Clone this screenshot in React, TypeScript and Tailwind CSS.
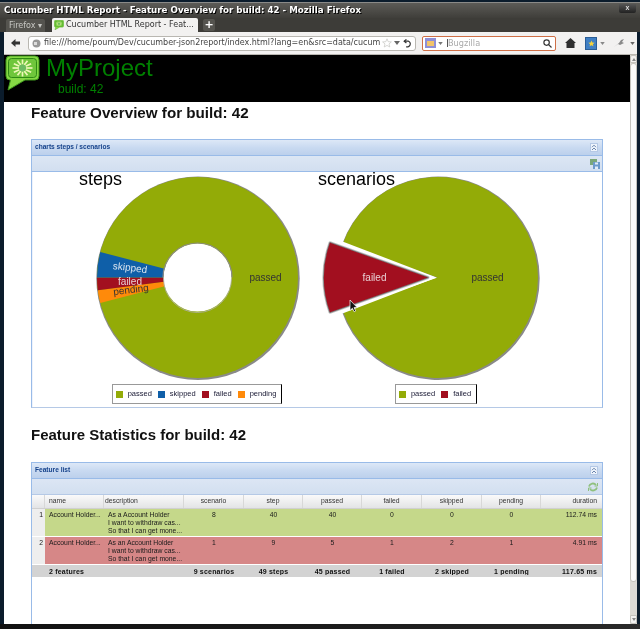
import React from "react";

const AR = "font-['Liberation_Sans',Arial,sans-serif]";
const GRID = "grid grid-cols-[13px_59px_80px_60px_59px_59px_60px_60px_59px_61px]";
const INNER = "grid grid-cols-[59px_80px_60px_59px_59px_60px_60px_59px_61px]";

function sector(cx: number, cy: number, r: number, r0: number, a0: number, a1: number) {
  const p = (rad: number, a: number) => {
    const t = (a * Math.PI) / 180;
    return `${(cx + rad * Math.cos(t)).toFixed(2)} ${(cy + rad * Math.sin(t)).toFixed(2)}`;
  };
  const large = a1 - a0 > 180 ? 1 : 0;
  if (r0 > 0) return `M${p(r, a0)} A${r} ${r} 0 ${large} 1 ${p(r, a1)} L${p(r0, a1)} A${r0} ${r0} 0 ${large} 0 ${p(r0, a0)} Z`;
  return `M${cx} ${cy} L${p(r, a0)} A${r} ${r} 0 ${large} 1 ${p(r, a1)} Z`;
}

const OLIVE = "#93ab07";
const BLUE = "#0f5fa8";
const RED = "#a20f1f";
const ORANGE = "#ff8a0a";

function StepsPie() {
  const cx = 103.5, cy = 105.5, r = 100.5, h = 34;
  return (
    <svg width="208" height="210" viewBox="0 0 208 210" className="block overflow-visible">
      <circle cx={cx + 0.5} cy={cy + 0.8} r={r + 1.2} fill="#8a8a8a" />
      <circle cx={cx} cy={cy} r={r} fill={OLIVE} />
      <path d={sector(cx, cy, r, h, 165.3, 172.65)} fill={ORANGE} />
      <path d={sector(cx, cy, r, h, 172.65, 180)} fill={RED} />
      <path d={sector(cx, cy, r, h, 180, 194.7)} fill={BLUE} />
      <circle cx={cx} cy={cy} r={h} fill="#fff" />
      <path d={`M${cx - h - 0.5} ${cy} A${h + 0.5} ${h + 0.5} 0 0 1 ${cx + h + 0.5} ${cy}`} fill="none" stroke="#8a8a8a" strokeWidth="1.2" />
      <path d={`M${cx - h} ${cy + 1} A${h} ${h} 0 0 0 ${cx + h} ${cy + 1}`} fill="none" stroke="#b0b0b0" strokeWidth="0.8" />
      <g fontFamily="'Liberation Sans',Arial,sans-serif" fontSize="10" textAnchor="middle">
        <text x="171.5" y="109" fill="#333">passed</text>
        <text x="36" y="99" fill="#d9e4ef" transform="rotate(7 36 96)">skipped</text>
        <text x="36" y="112.5" fill="#e8d0d4">failed</text>
        <text x="37" y="121" fill="#333" transform="rotate(-7 37 118)">pending</text>
      </g>
    </svg>
  );
}

function ScenariosPie() {
  const cx = 114.5, cy = 105.5, r = 100.5;
  const fx = 105;
  const failed = sector(fx, cy, 104, 0, 160.5, 199.5);
  return (
    <svg width="226" height="210" viewBox="0 0 226 210" className="block overflow-visible">
      <path d={sector(cx + 0.5, cy + 0.8, r + 1.2, 0, 199.5, 520.5)} fill="#8a8a8a" />
      <path d={sector(cx, cy, r, 0, 199.5, 520.5)} fill={OLIVE} />
      <path d={sector(cx - 1, cy, r + 3, 0, 159, 201)} fill="#fff" />
      <path d={failed} fill="#b8b8b8" stroke="#c4c4c4" strokeWidth="3" strokeLinejoin="round" />
      <path d={failed} fill="#777" stroke="#777" strokeWidth="1.4" strokeLinejoin="round" />
      <path d={failed} fill={RED} />
      <g fontFamily="'Liberation Sans',Arial,sans-serif" fontSize="10" textAnchor="middle">
        <text x="164.5" y="109" fill="#333">passed</text>
        <text x="51.5" y="109" fill="#e8d0d4">failed</text>
      </g>
      <path d="M27 128v10.5l2.4-2.3 1.7 3.6 1.6-.8-1.7-3.4h3.2z" fill="#111" stroke="#fff" strokeWidth="0.7" />
    </svg>
  );
}

function Legend({ items, className }: { items: [string, string][]; className: string }) {
  return (
    <div className={`flex items-center h-[20px] bg-white border border-[#999] border-r-black pl-[3px] pr-[5px] ${className}`}>
      {items.map(([label, color], i) => (
        <div key={label} className={`flex items-center ${i > 0 ? "ml-[6px]" : ""}`}>
          <span className="w-[7px] h-[7px] block" style={{ backgroundColor: color }} />
          <span className="ml-[5px] text-[7.5px] leading-none text-[#20203a]">{label}</span>
        </div>
      ))}
    </div>
  );
}

function Collapse() {
  return (
    <div className="w-[8px] h-[9px] bg-[#eef4fc] border border-[#b5c9e6] flex items-center justify-center">
      <svg width="6" height="7" viewBox="0 0 6 7" fill="none" stroke="#4a6a98" strokeWidth="0.8">
        <path d="M1 3.2L3 1.2L5 3.2M1 6L3 4L5 6" />
      </svg>
    </div>
  );
}

function PanelHead({ title }: { title: string }) {
  return (
    <div className="h-[16px] shrink-0 flex items-center justify-between pl-[3px] pr-[4px] border-b border-[#99bbe8] bg-gradient-to-b from-[#dde8f7] via-[#c9daf1] to-[#bcd0ec]">
      <span className="text-[6.6px] font-bold text-[#15428b] leading-none">{title}</span>
      <Collapse />
    </div>
  );
}

function Bubble({ size }: { size: number }) {
  const angles = [0, 30, 60, 90, 120, 150, 180, 210, 240, 270, 300, 330];
  return (
    <svg width={size} height={size * 36 / 35} viewBox="0 0 35 36" className="block shrink-0">
      <path d="M5 1H30Q34 1 34 5V21Q34 25 30 25H20L3 35L5.5 25H5Q1 25 1 21V5Q1 1 5 1Z" fill="#86d845" stroke="#3f9a1c" strokeWidth="1" />
      <rect x="3.5" y="3.5" width="28" height="19" rx="3" fill="#6fc63b" stroke="#2f8a14" strokeWidth="1" />
      {angles.map((a) => (
        <line key={a} x1={17.5 + 3.5 * Math.cos((a * Math.PI) / 180)} y1={13 + 3.5 * Math.sin((a * Math.PI) / 180)} x2={17.5 + 10 * Math.cos((a * Math.PI) / 180)} y2={13 + 8.5 * Math.sin((a * Math.PI) / 180)} stroke="#eef7b8" strokeWidth="1.7" />
      ))}
      <circle cx="17.5" cy="13" r="3.4" fill="#6dbb62" />
    </svg>
  );
}

function Cell({ children, align = "text-center" }: { children?: React.ReactNode; align?: string }) {
  return <div className={`${align} truncate`}>{children}</div>;
}

const columns = ["scenario", "step", "passed", "failed", "skipped", "pending"];

function Row({ n, bg, desc, vals, dur }: { n: number; bg: string; desc: string[]; vals: number[]; dur: string }) {
  return (
    <div className={`${GRID} h-[28px] border-b border-white text-[6.8px] leading-[8px] text-[#1a1a1a]`}>
      <div className="bg-[#eeeeee] text-right pr-[2px] pt-[2px]">{n}</div>
      <div className={`col-span-9 ${INNER} pt-[2px] ${bg}`}>
        <div className="pl-[4px]">Account Holder...</div>
        <div className="pl-[4px]">
          {desc.map((d) => (
            <div key={d}>{d}</div>
          ))}
        </div>
        {vals.map((v, i) => (
          <Cell key={i}>{v}</Cell>
        ))}
        <div className="text-right pr-[5px]">{dur}</div>
      </div>
    </div>
  );
}

export default function App() {
  return (
    <div className={`w-[640px] h-[629px] overflow-hidden flex flex-col bg-[#0b1c2c] ${AR} blur-[0.4px]`}>
      {/* Title bar */}
      <div className="h-[16px] shrink-0 mt-[2px] border-t border-[#8a8a88] bg-gradient-to-b from-[#5c5b57] to-[#3f3e3a] flex items-center justify-between pl-[4px] pr-[4px]">
        <span className="font-['DejaVu_Sans',sans-serif] font-bold text-[8.7px] text-white leading-none [text-shadow:1px_1px_0_#000]">
          Cucumber HTML Report - Feature Overview for build: 42 - Mozilla Firefox
        </span>
        <div className="w-[17px] h-[9px] -mt-[5px] rounded-b-[2px] bg-gradient-to-b from-[#555] to-[#222] text-[#ddd] text-[7px] leading-[8px] text-center font-bold">x</div>
      </div>
      {/* Tab bar */}
      <div className="h-[14px] shrink-0 bg-[#3d3c38] flex items-end pl-[6px] font-['DejaVu_Sans',sans-serif]">
        <div className="w-[39px] h-[13px] rounded-t-[2px] bg-[#55544f] text-[#c8c8c4] text-[8px] leading-[13px] pl-[3px] whitespace-nowrap">Firefox ▾</div>
        <div className="ml-[7px] w-[146px] h-[14px] rounded-t-[2px] bg-[#f2f1f0] flex items-center pl-[2px] text-[#333] text-[8px] whitespace-nowrap">
          <Bubble size={10} />
          <span className="ml-[2px]">Cucumber HTML Report - Feat...</span>
        </div>
        <div className="ml-[5px] mb-[1px] w-[12px] h-[12px] rounded-[2px] bg-[#55544f] text-white text-[11px] leading-[11px] text-center font-bold">+</div>
      </div>
      {/* Nav bar */}
      <div className="h-[23px] shrink-0 ml-[4px] mr-[3px] bg-[#f2f1f0] flex items-center border-b border-[#b8b6b0]">
        <svg width="9" height="8" viewBox="0 0 9 8" className="ml-[7px]"><path d="M0 4L4.5 0V2.5H9V5.5H4.5V8Z" fill="#333" /></svg>
        <div className="ml-[8px] w-[388px] h-[15px] bg-white border border-[#b9b7b1] rounded-[3px] flex items-center pl-[3px] pr-[3px]">
          <svg width="9" height="9" viewBox="0 0 9 9"><circle cx="4.5" cy="4.5" r="4" fill="#999" /><path d="M2 3h3v3h-3z" fill="#ddd" /></svg>
          <span className="ml-[3px] w-[336px] whitespace-nowrap text-[8px] leading-none text-[#444] font-['DejaVu_Sans',sans-serif]">file:///home/poum/Dev/cucumber-json2report/index.html?lang=en&amp;src=data/cucum</span>
          <svg width="10" height="10" viewBox="0 0 10 10" className="ml-[2px]"><path d="M5 .8L6.2 3.7L9.4 3.9L7 5.9L7.8 9L5 7.4L2.2 9L3 5.9L.6 3.9L3.8 3.7Z" fill="#fff" stroke="#c5c5c2" strokeWidth=".7" /></svg>
          <svg width="6" height="4" viewBox="0 0 6 4" className="ml-[2px]"><path d="M0 0H6L3 4Z" fill="#666" /></svg>
          <svg width="9" height="9" viewBox="0 0 9 9" fill="none" stroke="#333" strokeWidth="1.2" className="ml-[3px]"><path d="M1.5 2.2H5.5A2.4 2.4 0 1 1 3.2 7.6" /><path d="M3.4.4L1.2 2.2L3.4 4" fill="none" /></svg>
        </div>
        <div className="ml-[6px] w-[134px] h-[15px] bg-white border border-[#cf6f46] rounded-[2px] flex items-center pl-[2px] pr-[3px]">
          <span className="w-[11px] h-[10px] bg-[#8f8fd6] flex items-center justify-center"><span className="w-[7px] h-[5px] bg-[#f2c36a] block" /></span>
          <svg width="5" height="3" viewBox="0 0 6 4" className="ml-[2px]"><path d="M0 0H6L3 4Z" fill="#777" /></svg>
          <span className="ml-[4px] border-l border-[#555] text-[8.2px] leading-none text-[#a9a9a9] font-['DejaVu_Sans',sans-serif] flex-1">Bugzilla</span>
          <svg width="9" height="9" viewBox="0 0 9 9" fill="none" stroke="#333" strokeWidth="1.2"><circle cx="3.6" cy="3.6" r="2.7" /><path d="M5.6 5.6L8.5 8.5" /></svg>
        </div>
        <svg width="11" height="10" viewBox="0 0 11 10" className="ml-[9px]"><path d="M5.5 0L11 5H9.5V10H1.5V5H0Z" fill="#2f2f2f" /></svg>
        <div className="ml-[9px] w-[12px] h-[13px] bg-[#3f7fc4] border border-[#2a5d96] flex items-center justify-center">
          <svg width="7" height="7" viewBox="0 0 10 10"><path d="M5 .8L6.2 3.7L9.4 3.9L7 5.9L7.8 9L5 7.4L2.2 9L3 5.9L.6 3.9L3.8 3.7Z" fill="#f4d23c" /></svg>
        </div>
        <svg width="5" height="3" viewBox="0 0 6 4" className="ml-[3px]"><path d="M0 0H6L3 4Z" fill="#888" /></svg>
        <svg width="11" height="9" viewBox="0 0 11 9" className="ml-[9px]"><path d="M0 8L5 4L7 1L10 0L8 3L10 4L6 6L4 5Z" fill="#8a8a8a" /></svg>
        <svg width="5" height="3" viewBox="0 0 6 4" className="ml-[5px]"><path d="M0 0H6L3 4Z" fill="#666" /></svg>
      </div>
      {/* Page + scrollbar */}
      <div className="flex-1 min-h-0 ml-[4px] mr-[3px] flex">
        <div className="flex-1 min-w-0 bg-white overflow-hidden flex flex-col">
          <div className="h-[47px] shrink-0 bg-black flex pl-[1px] text-[#008000]">
            <Bubble size={35} />
            <div className="ml-[6px] flex flex-col">
              <span className="text-[24px] leading-[26px]">MyProject</span>
              <span className="ml-[12px] text-[12px] leading-[13px] mt-[2px]">build: 42</span>
            </div>
          </div>
          <div className="pl-[27px] w-[599px] flex-1 min-h-0 flex flex-col">
            <h1 className="text-[15.2px] font-bold leading-[20px] mt-[1px] text-[#111]">Feature Overview for build: 42</h1>
            <section className="mt-[16px] h-[269px] shrink-0 border border-[#99bbe8] border-b-[#b5c9e6] flex flex-col">
              <PanelHead title="charts steps / scenarios" />
              <div className="h-[16px] shrink-0 flex items-center justify-end pr-[2px] border-b border-[#99bbe8] bg-gradient-to-b from-[#dce6f4] to-[#d2dff0]">
                <svg width="10" height="10" viewBox="0 0 10 10"><path d="M0 0H7V6H0z" fill="#7aa77a" /><path d="M3 3H10V10H3z" fill="#6d9acb" /><path d="M5 3.5H8V5.5H5zM5 7.5H8V10H5z" fill="#e2ebf7" /></svg>
              </div>
              <div className="flex-1 min-h-0 bg-white flex pl-[61px] border-l border-[#eef3fc]">
                <div className="relative w-[208px] flex flex-col items-center">
                  <StepsPie />
                  <span className="absolute -left-[15px] -top-[4px] text-[18px] leading-[22px] text-black">steps</span>
                  <Legend className="mt-[2px] mr-[2px]" items={[["passed", OLIVE], ["skipped", BLUE], ["failed", RED], ["pending", ORANGE]]} />
                </div>
                <div className="relative ml-[21px] w-[226px] flex flex-col items-center">
                  <ScenariosPie />
                  <span className="absolute -left-[5px] -top-[4px] text-[18px] leading-[22px] text-black">scenarios</span>
                  <Legend className="mt-[2px]" items={[["passed", OLIVE], ["failed", RED]]} />
                </div>
              </div>
            </section>
            <h1 className="mt-[17px] text-[15px] font-bold leading-[20px] text-[#111]">Feature Statistics for build: 42</h1>
            <section className="mt-[17px] flex-1 min-h-[162px] border-x border-t border-[#99bbe8] flex flex-col">
              <PanelHead title="Feature list" />
              <div className="h-[16px] shrink-0 flex items-center justify-end pr-[4px] bg-gradient-to-b from-[#dce6f4] to-[#d2dff0] border-b border-[#b5c9e6]">
                <svg width="10" height="10" viewBox="0 0 10 10" fill="none" stroke="#8fc07e" strokeWidth="1.8"><path d="M1 4.5A4 4 0 0 1 8 3" /><path d="M9 5.5A4 4 0 0 1 2 7" /><path d="M6.5 4H9.5V1" strokeWidth="1" /><path d="M3.5 6H.5V9" strokeWidth="1" /></svg>
              </div>
              <div className="flex-1 bg-white">
                <div className={`${GRID} h-[14px] items-center border-b border-[#d0d0d0] bg-gradient-to-b from-[#fafafa] to-[#e3e4e6] text-[6.8px] leading-none text-[#333]`}>
                  <div className="h-full border-r border-[#d8d8d8]" />
                  <div className="pl-[4px] h-full flex items-center border-r border-[#d8d8d8]">name</div>
                  <div className="pl-[1px] h-full flex items-center border-r border-[#d8d8d8]">description</div>
                  {columns.map((c) => (
                    <div key={c} className="h-full flex items-center justify-center border-r border-[#d8d8d8]">{c}</div>
                  ))}
                  <div className="h-full flex items-center justify-end pr-[5px]">duration</div>
                </div>
                <Row n={1} bg="bg-[#c5d88a]" desc={["As a Account Holder", "I want to withdraw cas...", "So that I can get mone..."]} vals={[8, 40, 40, 0, 0, 0]} dur="112.74 ms" />
                <Row n={2} bg="bg-[#d68787]" desc={["As an Account Holder", "I want to withdraw cas...", "So that I can get mone..."]} vals={[1, 9, 5, 1, 2, 1]} dur="4.91 ms" />
                <div className={`${GRID} h-[12px] items-center bg-[#d3d3d3] text-[7px] font-bold leading-none text-[#111] tracking-[0.2px]`}>
                  <div />
                  <div className="pl-[4px]">2 features</div>
                  <div />
                  <Cell>9 scenarios</Cell>
                  <Cell>49 steps</Cell>
                  <Cell>45 passed</Cell>
                  <Cell>1 failed</Cell>
                  <Cell>2 skipped</Cell>
                  <Cell>1 pending</Cell>
                  <div className="text-right pr-[5px]">117.65 ms</div>
                </div>
              </div>
            </section>
          </div>
        </div>
        {/* Scrollbar */}
        <div className="w-[7px] shrink-0 bg-[#dcdad5] flex flex-col">
          <div className="h-[8px] bg-[#f2f1f0] rounded-t-[2px] border border-[#c4c2bc] flex items-center justify-center">
            <svg width="4" height="3" viewBox="0 0 4 3"><path d="M0 3L2 0L4 3Z" fill="#888" /></svg>
          </div>
          <div className="h-[519px] bg-[#fafaf9] border border-[#c4c2bc] rounded-[3px]" />
          <div className="flex-1" />
          <div className="h-[9px] bg-[#f2f1f0] rounded-b-[2px] border border-[#c4c2bc] flex items-center justify-center">
            <svg width="4" height="3" viewBox="0 0 4 3"><path d="M0 0L2 3L4 0Z" fill="#888" /></svg>
          </div>
        </div>
      </div>
      {/* Bottom frame */}
      <div className="h-[5px] shrink-0 bg-gradient-to-r from-[#111] via-[#1b1b1b] to-[#2a2a2a]" />
    </div>
  );
}
